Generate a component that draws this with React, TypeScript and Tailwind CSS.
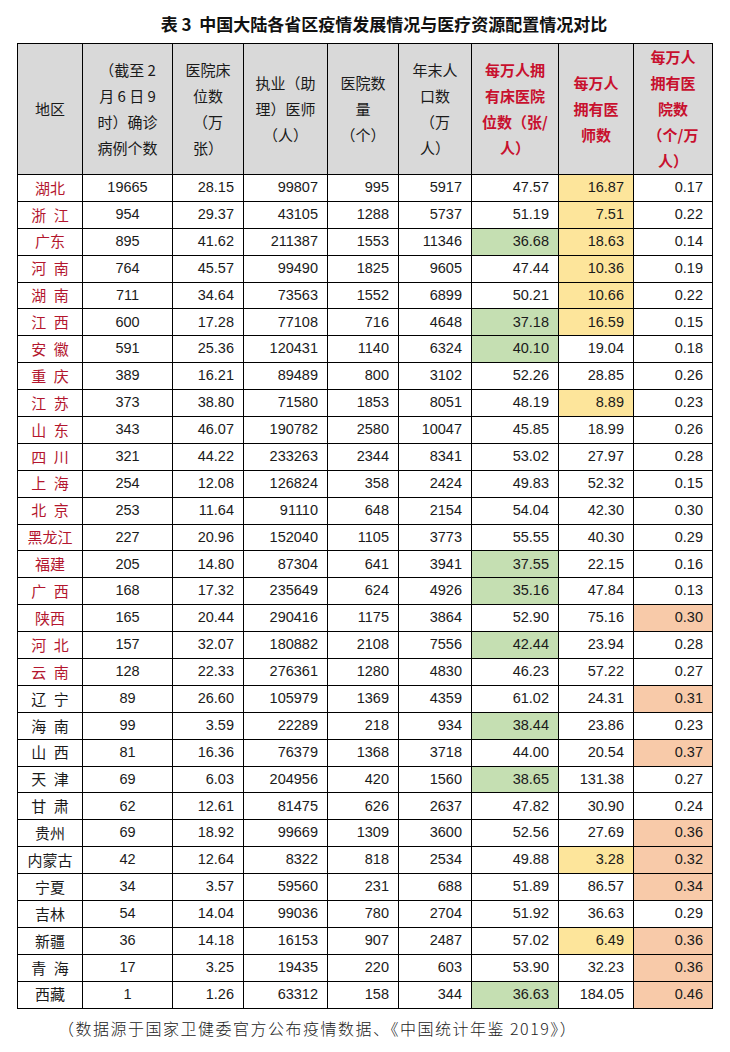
import React from "react";

type Mark = "G" | "Y" | "O" | "";

type Row = {
  name: string;
  red: boolean;
  cases: string;
  beds: string;
  doctors: string;
  hospitals: string;
  pop: string;
  bedsPer: string;
  bedsMark?: Mark;
  docsPer: string;
  docsMark?: Mark;
  hospPer: string;
  hospMark?: Mark;
};

const sp = "\u2002";

const rows: Row[] = [
  { name: "湖北", red: true, cases: "19665", beds: "28.15", doctors: "99807", hospitals: "995", pop: "5917", bedsPer: "47.57", docsPer: "16.87", docsMark: "Y", hospPer: "0.17" },
  { name: `浙${sp}江`, red: true, cases: "954", beds: "29.37", doctors: "43105", hospitals: "1288", pop: "5737", bedsPer: "51.19", docsPer: "7.51", docsMark: "Y", hospPer: "0.22" },
  { name: "广东", red: true, cases: "895", beds: "41.62", doctors: "211387", hospitals: "1553", pop: "11346", bedsPer: "36.68", bedsMark: "G", docsPer: "18.63", docsMark: "Y", hospPer: "0.14" },
  { name: `河${sp}南`, red: true, cases: "764", beds: "45.57", doctors: "99490", hospitals: "1825", pop: "9605", bedsPer: "47.44", docsPer: "10.36", docsMark: "Y", hospPer: "0.19" },
  { name: `湖${sp}南`, red: true, cases: "711", beds: "34.64", doctors: "73563", hospitals: "1552", pop: "6899", bedsPer: "50.21", docsPer: "10.66", docsMark: "Y", hospPer: "0.22" },
  { name: `江${sp}西`, red: true, cases: "600", beds: "17.28", doctors: "77108", hospitals: "716", pop: "4648", bedsPer: "37.18", bedsMark: "G", docsPer: "16.59", docsMark: "Y", hospPer: "0.15" },
  { name: `安${sp}徽`, red: true, cases: "591", beds: "25.36", doctors: "120431", hospitals: "1140", pop: "6324", bedsPer: "40.10", bedsMark: "G", docsPer: "19.04", hospPer: "0.18" },
  { name: `重${sp}庆`, red: true, cases: "389", beds: "16.21", doctors: "89489", hospitals: "800", pop: "3102", bedsPer: "52.26", docsPer: "28.85", hospPer: "0.26" },
  { name: `江${sp}苏`, red: true, cases: "373", beds: "38.80", doctors: "71580", hospitals: "1853", pop: "8051", bedsPer: "48.19", docsPer: "8.89", docsMark: "Y", hospPer: "0.23" },
  { name: `山${sp}东`, red: true, cases: "343", beds: "46.07", doctors: "190782", hospitals: "2580", pop: "10047", bedsPer: "45.85", docsPer: "18.99", hospPer: "0.26" },
  { name: `四${sp}川`, red: true, cases: "321", beds: "44.22", doctors: "233263", hospitals: "2344", pop: "8341", bedsPer: "53.02", docsPer: "27.97", hospPer: "0.28" },
  { name: `上${sp}海`, red: true, cases: "254", beds: "12.08", doctors: "126824", hospitals: "358", pop: "2424", bedsPer: "49.83", docsPer: "52.32", hospPer: "0.15" },
  { name: `北${sp}京`, red: true, cases: "253", beds: "11.64", doctors: "91110", hospitals: "648", pop: "2154", bedsPer: "54.04", docsPer: "42.30", hospPer: "0.30" },
  { name: "黑龙江", red: true, cases: "227", beds: "20.96", doctors: "152040", hospitals: "1105", pop: "3773", bedsPer: "55.55", docsPer: "40.30", hospPer: "0.29" },
  { name: "福建", red: true, cases: "205", beds: "14.80", doctors: "87304", hospitals: "641", pop: "3941", bedsPer: "37.55", bedsMark: "G", docsPer: "22.15", hospPer: "0.16" },
  { name: `广${sp}西`, red: true, cases: "168", beds: "17.32", doctors: "235649", hospitals: "624", pop: "4926", bedsPer: "35.16", bedsMark: "G", docsPer: "47.84", hospPer: "0.13" },
  { name: "陕西", red: true, cases: "165", beds: "20.44", doctors: "290416", hospitals: "1175", pop: "3864", bedsPer: "52.90", docsPer: "75.16", hospPer: "0.30", hospMark: "O" },
  { name: `河${sp}北`, red: true, cases: "157", beds: "32.07", doctors: "180882", hospitals: "2108", pop: "7556", bedsPer: "42.44", bedsMark: "G", docsPer: "23.94", hospPer: "0.28" },
  { name: `云${sp}南`, red: true, cases: "128", beds: "22.33", doctors: "276361", hospitals: "1280", pop: "4830", bedsPer: "46.23", docsPer: "57.22", hospPer: "0.27" },
  { name: `辽${sp}宁`, red: false, cases: "89", beds: "26.60", doctors: "105979", hospitals: "1369", pop: "4359", bedsPer: "61.02", docsPer: "24.31", hospPer: "0.31", hospMark: "O" },
  { name: `海${sp}南`, red: false, cases: "99", beds: "3.59", doctors: "22289", hospitals: "218", pop: "934", bedsPer: "38.44", bedsMark: "G", docsPer: "23.86", hospPer: "0.23" },
  { name: `山${sp}西`, red: false, cases: "81", beds: "16.36", doctors: "76379", hospitals: "1368", pop: "3718", bedsPer: "44.00", docsPer: "20.54", hospPer: "0.37", hospMark: "O" },
  { name: `天${sp}津`, red: false, cases: "69", beds: "6.03", doctors: "204956", hospitals: "420", pop: "1560", bedsPer: "38.65", bedsMark: "G", docsPer: "131.38", hospPer: "0.27" },
  { name: `甘${sp}肃`, red: false, cases: "62", beds: "12.61", doctors: "81475", hospitals: "626", pop: "2637", bedsPer: "47.82", docsPer: "30.90", hospPer: "0.24" },
  { name: "贵州", red: false, cases: "69", beds: "18.92", doctors: "99669", hospitals: "1309", pop: "3600", bedsPer: "52.56", docsPer: "27.69", hospPer: "0.36", hospMark: "O" },
  { name: "内蒙古", red: false, cases: "42", beds: "12.64", doctors: "8322", hospitals: "818", pop: "2534", bedsPer: "49.88", docsPer: "3.28", docsMark: "Y", hospPer: "0.32", hospMark: "O" },
  { name: "宁夏", red: false, cases: "34", beds: "3.57", doctors: "59560", hospitals: "231", pop: "688", bedsPer: "51.89", docsPer: "86.57", hospPer: "0.34", hospMark: "O" },
  { name: "吉林", red: false, cases: "54", beds: "14.04", doctors: "99036", hospitals: "780", pop: "2704", bedsPer: "51.92", docsPer: "36.63", hospPer: "0.29" },
  { name: "新疆", red: false, cases: "36", beds: "14.18", doctors: "16153", hospitals: "907", pop: "2487", bedsPer: "57.02", docsPer: "6.49", docsMark: "Y", hospPer: "0.36", hospMark: "O" },
  { name: `青${sp}海`, red: false, cases: "17", beds: "3.25", doctors: "19435", hospitals: "220", pop: "603", bedsPer: "53.90", docsPer: "32.23", hospPer: "0.36", hospMark: "O" },
  { name: "西藏", red: false, cases: "1", beds: "1.26", doctors: "63312", hospitals: "158", pop: "344", bedsPer: "36.63", bedsMark: "G", docsPer: "184.05", hospPer: "0.46", hospMark: "O" },
];

const markBg: Record<string, string> = {
  G: "bg-[#c5dfb2]",
  Y: "bg-[#fde59b]",
  O: "bg-[#f8caa9]",
  "": "",
};

const headers: { lines: string[]; red?: boolean; width: string }[] = [
  { lines: ["地区"], width: "w-[65px]" },
  { lines: ["（截至 2", "月 6 日 9", "时）确诊", "病例个数"], width: "w-[90px]" },
  { lines: ["医院床", "位数", "（万", "张）"], width: "w-[71px]" },
  { lines: ["执业（助", "理）医师", "（人）"], width: "w-[84px]" },
  { lines: ["医院数", "量", "（个）"], width: "w-[71px]" },
  { lines: ["年末人", "口数", "（万", "人）"], width: "w-[73px]" },
  { lines: ["每万人拥", "有床医院", "位数（张/", "人）"], red: true, width: "w-[87px]" },
  { lines: ["每万人", "拥有医", "师数"], red: true, width: "w-[75px]" },
  { lines: ["每万人", "拥有医", "院数", "（个/万", "人）"], red: true, width: "w-[79px]" },
];

function Num({ value, mark = "" }: { value: string; mark?: Mark }) {
  return (
    <td className={`border border-black text-right pr-[9px] ${markBg[mark]}`}>{value}</td>
  );
}

export default function App() {
  return (
    <div className="w-[730px] h-[1052px] bg-white text-[#1a1a1a] font-['Liberation_Sans','Noto_Sans_CJK_SC',sans-serif]">
      <div className="h-[43px] pt-[5px] pl-[38px] flex items-center justify-center text-[17px] font-bold text-[#111] font-['Noto_Sans_CJK_SC',sans-serif]">
        表 3&nbsp; 中国大陆各省区疫情发展情况与医疗资源配置情况对比
      </div>

      <table className="ml-[17px] w-[695px] table-fixed border-collapse text-[14.5px]">
        <colgroup>
          {headers.map((h, i) => (
            <col key={i} className={h.width} />
          ))}
        </colgroup>
        <thead>
          <tr className="h-[131px] bg-[#d9d9d9]">
            {headers.map((h, i) => (
              <th
                key={i}
                className={`border border-black p-0 text-center align-middle text-[15px] leading-[26px] font-['Noto_Sans_CJK_SC',sans-serif] ${
                  h.red ? "text-[#c8102e] font-bold" : "font-normal text-[#1a1a1a]"
                }`}
              >
                {h.lines.map((l, j) => (
                  <div key={j} className="whitespace-nowrap">
                    {l}
                  </div>
                ))}
              </th>
            ))}
          </tr>
        </thead>
        <tbody>
          {rows.map((r) => (
            <tr key={r.name} className="h-[26.9px]">
              <td
                className={`border border-black text-center text-[15px] font-['Noto_Sans_CJK_SC',sans-serif] ${
                  r.red ? "text-[#b3162e]" : "text-[#1a1a1a]"
                }`}
              >
                {r.name}
              </td>
              <td className="border border-black text-center">{r.cases}</td>
              <Num value={r.beds} />
              <Num value={r.doctors} />
              <Num value={r.hospitals} />
              <Num value={r.pop} />
              <Num value={r.bedsPer} mark={r.bedsMark} />
              <Num value={r.docsPer} mark={r.docsMark} />
              <Num value={r.hospPer} mark={r.hospMark} />
            </tr>
          ))}
        </tbody>
      </table>

      <div className="pl-[58px] pt-[7px] text-[16px] tracking-[1.5px] text-[#222] font-light font-['Noto_Sans_CJK_SC',sans-serif]">
        （数据源于国家卫健委官方公布疫情数据、《中国统计年鉴 2019》）
      </div>
    </div>
  );
}
